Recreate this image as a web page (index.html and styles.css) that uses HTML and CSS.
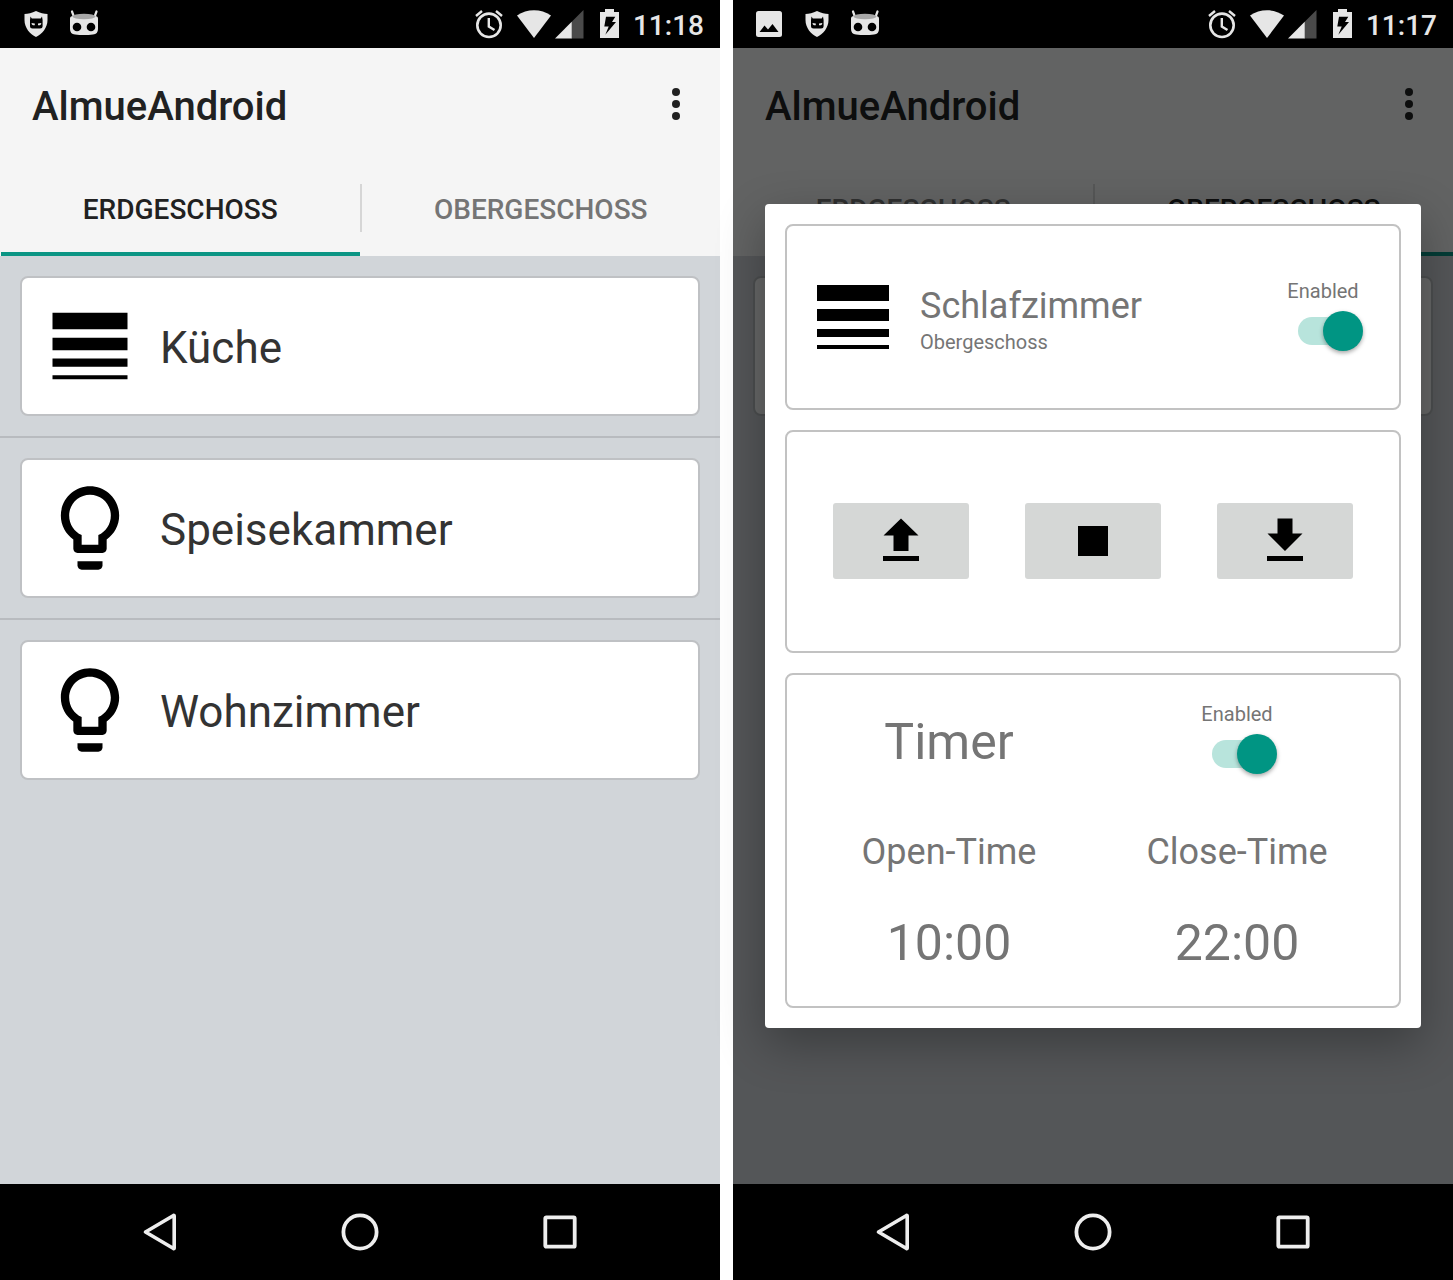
FILE: index.html
```html
<!DOCTYPE html>
<html lang="de">
<head>
<meta charset="utf-8">
<meta name="viewport" content="width=device-width, initial-scale=1">
<title>AlmueAndroid</title>
<link rel="stylesheet" href="styles.css">
</head>
<body>
<svg class="sprite" aria-hidden="true">
  <symbol id="shield" viewBox="0 0 48 48">
    <path fill="#e6e6e6" d="M24 11C20 13 16 14 12.500 14V20C12.500 28 18 34 24 37C30 34 35.500 28 35.500 20V14C32 14 28 13 24 11Z"/>
    <path d="M18.500 16.500L19.800 18.500H28.700L30 16.500L30.600 20V26Q30.600 28.500 28 28.500H20.500Q18 28.500 18 26V20Z"/>
    <path fill="#e6e6e6" d="M19.500 23L22.800 23.500V25.300H21Q19.500 25 19.500 23ZM29.300 23L26 23.500V25.300H27.800Q29.300 25 29.300 23Z"/>
  </symbol>
  <symbol id="robot" viewBox="0 0 48 48">
    <path d="M12 11.500L14 17M36.500 11.500L34.500 17" stroke="#e6e6e6" stroke-width="2.200" stroke-linecap="round"/>
    <path fill="#e6e6e6" d="M10 18.500Q10 16 13 16H35Q38 16 38 18.500V29Q38 34 33 34.500Q24 35.500 15 34.500Q10 34 10 29Z"/>
    <ellipse cx="24" cy="16.500" rx="11.500" ry="2.800" fill="#a8a8a8"/>
    <circle cx="17" cy="27" r="4.300"/><circle cx="31" cy="27" r="4.300"/>
  </symbol>
  <symbol id="picture" viewBox="0 0 48 48">
    <rect x="11" y="11" width="26" height="26" rx="2.500" fill="#e6e6e6"/>
    <path d="M14.500 32L19.500 25.500L23 29.500L27.500 24L33.500 32Z"/>
  </symbol>
  <symbol id="alarm" viewBox="475 0 38 48">
    <circle cx="489" cy="25.300" r="11.700" fill="none" stroke="#e6e6e6" stroke-width="2.600"/>
    <path d="M476 16L482 11M496 11L502 16M488.800 18V26.500L494.500 30" fill="none" stroke="#e6e6e6" stroke-width="2.400"/>
  </symbol>
  <symbol id="wifi" viewBox="517 0 34 48">
    <path fill="#e6e6e6" d="M534 38L517 15.500C527 8.500 541 8.500 551 15.500Z"/>
  </symbol>
  <symbol id="signal" viewBox="555 0 32 48">
    <path fill="#4a4a4a" d="M571 22.500L583.500 10V38.500H571Z"/>
    <path fill="#e6e6e6" d="M555 38.500L571.700 21.800V38.500Z"/>
  </symbol>
  <symbol id="battery" viewBox="591 0 38 48">
    <path fill="#e6e6e6" d="M600 12H605V9H614V12H619V38H600Z"/>
    <path d="M606 16.700H615.300L612 22H616L605.300 34.700L608.700 26.500H604.300Z"/>
  </symbol>
  <symbol id="dots" viewBox="0 0 48 48">
    <circle cx="24" cy="12" r="4"/><circle cx="24" cy="24" r="4"/><circle cx="24" cy="36" r="4"/>
  </symbol>
  <symbol id="blinds" viewBox="0 0 24 24">
    <path d="M3 17h18v-2H3v2zm0 3h18v-1H3v1zm0-7h18v-3H3v3zm0-9v4h18V4H3z"/>
  </symbol>
  <symbol id="bulb" viewBox="0 0 24 24">
    <path d="M9 21c0 .55.45 1 1 1h4c.55 0 1-.45 1-1v-1H9v1z"/>
    <path fill-rule="evenodd" d="M12 2C8.140 2 5 5.140 5 9c0 2.380 1.190 4.470 3 5.740V17c0 .55.45 1 1 1h6c.55 0 1-.45 1-1v-2.260c1.810-1.270 3-3.360 3-5.740 0-3.860-3.140-7-7-7zM14 13.700V16h-4v-2.300C8.200 12.900 7 11.100 7 9c0-2.760 2.240-5 5-5s5 2.240 5 5c0 2.100-1.200 3.900-3 4.700z"/>
  </symbol>
  <symbol id="back" viewBox="0 0 48 48">
    <path d="M9.500 24L37.500 7.500Q38.200 7.200 38.200 8V40Q38.200 40.800 37.500 40.500Z" fill="none" stroke="#eee" stroke-width="3.600" stroke-linejoin="round"/>
  </symbol>
  <symbol id="home" viewBox="0 0 48 48">
    <circle cx="24" cy="24" r="16.600" fill="none" stroke="#eee" stroke-width="3.800"/>
  </symbol>
  <symbol id="recent" viewBox="0 0 48 48">
    <rect x="9.300" y="9.300" width="29.400" height="29.400" rx="1" fill="none" stroke="#eee" stroke-width="3.800"/>
  </symbol>
</svg>

<main class="screens">
  <section class="screen">
    <div class="status">
      <svg class="status-icon"><use href="#shield"/></svg>
      <svg class="status-icon"><use href="#robot"/></svg>
      <div class="status-right">
        <svg class="alarm"><use href="#alarm"/></svg>
        <svg class="wifi"><use href="#wifi"/></svg>
        <svg class="signal"><use href="#signal"/></svg>
        <svg class="battery"><use href="#battery"/></svg>
        <span class="clock">11:18</span>
      </div>
    </div>
    <div class="app">
      <header class="titlebar">
        <h1 class="title">AlmueAndroid</h1>
        <button class="menu"><svg><use href="#dots"/></svg></button>
      </header>
      <nav class="tabs">
        <button class="tab tab-active">ERDGESCHOSS</button>
        <span class="tab-divider"></span>
        <button class="tab">OBERGESCHOSS</button>
      </nav>
      <ul class="rooms">
        <li class="room"><button class="card"><svg class="card-icon"><use href="#blinds"/></svg><span class="card-name">Küche</span></button></li>
        <li class="room"><button class="card"><svg class="card-icon"><use href="#bulb"/></svg><span class="card-name">Speisekammer</span></button></li>
        <li class="room"><button class="card"><svg class="card-icon"><use href="#bulb"/></svg><span class="card-name">Wohnzimmer</span></button></li>
      </ul>
    </div>
    <nav class="navbar">
      <button class="nav-button"><svg><use href="#back"/></svg></button>
      <button class="nav-button"><svg><use href="#home"/></svg></button>
      <button class="nav-button"><svg><use href="#recent"/></svg></button>
    </nav>
  </section>

  <section class="screen">
    <div class="status">
      <svg class="status-icon"><use href="#picture"/></svg>
      <svg class="status-icon"><use href="#shield"/></svg>
      <svg class="status-icon"><use href="#robot"/></svg>
      <div class="status-right">
        <svg class="alarm"><use href="#alarm"/></svg>
        <svg class="wifi"><use href="#wifi"/></svg>
        <svg class="signal"><use href="#signal"/></svg>
        <svg class="battery"><use href="#battery"/></svg>
        <span class="clock">11:17</span>
      </div>
    </div>
    <div class="app">
      <header class="titlebar">
        <h1 class="title">AlmueAndroid</h1>
        <button class="menu"><svg><use href="#dots"/></svg></button>
      </header>
      <nav class="tabs">
        <button class="tab">ERDGESCHOSS</button>
        <span class="tab-divider"></span>
        <button class="tab tab-active">OBERGESCHOSS</button>
      </nav>
      <ul class="rooms">
        <li class="room"><div class="card"></div></li>
      </ul>
      <div class="scrim">
        <div class="dialog" role="dialog">
          <section class="panel device">
            <svg class="device-icon"><use href="#blinds"/></svg>
            <div class="device-text">
              <h2 class="device-name">Schlafzimmer</h2>
              <p class="device-floor">Obergeschoss</p>
            </div>
            <label class="toggle">Enabled<input class="switch" type="checkbox" role="switch" checked></label>
          </section>
          <section class="panel controls">
            <button class="control"><svg viewBox="0 0 48 48"><path d="M24 1.500L41.500 18.500H31.500V34H16.500V18.500H6.500ZM6 39H42V44H6Z"/></svg></button>
            <button class="control"><svg viewBox="0 0 48 48"><path d="M9 9H39V39H9Z"/></svg></button>
            <button class="control"><svg viewBox="0 0 48 48"><path d="M16.500 1.500H31.500V16.500H41.500L24 34L6.500 16.500H16.500ZM6 39H42V44H6Z"/></svg></button>
          </section>
          <section class="panel timer">
            <h2 class="big">Timer</h2>
            <label class="toggle">Enabled<input class="switch" type="checkbox" role="switch" checked></label>
            <span class="time-label" id="open">Open-Time</span>
            <span class="time-label" id="close">Close-Time</span>
            <button class="big" aria-describedby="open">10:00</button>
            <button class="big" aria-describedby="close">22:00</button>
          </section>
        </div>
      </div>
    </div>
    <nav class="navbar">
      <button class="nav-button"><svg><use href="#back"/></svg></button>
      <button class="nav-button"><svg><use href="#home"/></svg></button>
      <button class="nav-button"><svg><use href="#recent"/></svg></button>
    </nav>
  </section>
</main>
</body>
</html>
```
FILE: styles.css
```css
* {
  box-sizing: border-box;
}

body {
  margin: 0;
  background: #fff;
  font-family: Roboto, "Liberation Sans", sans-serif;
}

h1,
h2,
p,
ul {
  margin: 0;
  padding: 0;
  font-weight: 400;
}

button {
  border: 0;
  padding: 0;
  background: none;
  color: inherit;
  font: inherit;
}

svg {
  display: block;
}

.sprite {
  display: none;
}

.screens {
  display: grid;
  grid-template-columns: 1fr 1fr;
  gap: 13px;
  min-height: 100vh;
}

.screen {
  display: flex;
  flex-direction: column;
  background: #d1d5d9;
}

/* System status bar */
.status {
  display: flex;
  align-items: center;
  padding: 0 16px 0 12px;
  background: #000;
}

.status svg {
  height: 48px;
}

.status-icon {
  width: 48px;
}

.status-right {
  display: flex;
  align-items: center;
  gap: 4px;
  margin-left: auto;
}

.alarm {
  width: 38px;
}

.wifi {
  width: 34px;
}

.signal {
  width: 32px;
}

.battery {
  width: 38px;
}

.clock {
  padding-top: 4px;
  color: #e6e6e6;
  font-size: 28px;
  font-weight: 500;
  line-height: 44px;
}

/* App header */
.app {
  position: relative;
  flex: 1;
}

.titlebar {
  display: flex;
  align-items: center;
  justify-content: space-between;
  height: 112px;
  padding: 0 20px 0 32px;
  background: #f5f5f5;
  color: #212121;
}

.title {
  padding-top: 6px;
  font-size: 40px;
  font-weight: 500;
  line-height: 48px;
}

.menu svg {
  width: 48px;
  height: 48px;
  fill: #212121;
}

.tabs {
  display: flex;
  align-items: center;
  padding-left: 1px;
  background: #f5f5f5;
}

.tab {
  flex: 1;
  height: 96px;
  padding-top: 2px;
  color: #757575;
  font-size: 28px;
  font-weight: 500;
}

.tab-active {
  box-shadow: inset 0 -4px #0b9584;
  color: #212121;
}

.tab-divider {
  width: 2px;
  height: 48px;
  background: #d6d6d6;
}

/* Room list */
.rooms {
  list-style: none;
}

.room {
  padding: 20px;
}

.room + .room {
  border-top: 2px solid #b8bbbf;
}

.card {
  display: flex;
  align-items: center;
  gap: 20px;
  width: 100%;
  min-height: 140px;
  padding: 18px;
  border: 2px solid #bfc1c4;
  border-radius: 8px;
  background: #fff;
  color: #333;
  font-size: 44px;
  text-align: left;
}

.card-icon {
  width: 100px;
  height: 100px;
}

.card-name {
  padding-top: 4px;
}

/* Dialog */
.scrim {
  position: absolute;
  inset: 0;
  display: flex;
  align-items: center;
  padding: 0 32px;
  background: rgba(0, 2, 1, 0.6);
}

.dialog {
  display: flex;
  flex: 1;
  flex-direction: column;
  gap: 20px;
  padding: 20px;
  border-radius: 4px;
  background: #fff;
  box-shadow: 0 16px 48px rgba(0, 0, 0, 0.3);
  color: #757575;
}

.panel {
  border: 2px solid #c2c2c2;
  border-radius: 8px;
}

.device {
  display: flex;
  align-items: center;
  gap: 19px;
  padding: 43px 36px 43px 18px;
}

.device-icon {
  width: 96px;
  height: 96px;
}

.device-text {
  flex: 1;
  padding-top: 2px;
}

.device-name {
  font-size: 36px;
  line-height: 48px;
}

.device-floor {
  font-size: 20px;
  line-height: 24px;
}

.toggle {
  display: flex;
  flex-direction: column;
  align-items: center;
  gap: 8px;
  padding-bottom: 4px;
  font-size: 20px;
  line-height: 24px;
}

.timer .toggle {
  padding-bottom: 8px;
}

.switch {
  display: grid;
  align-items: center;
  justify-items: end;
  width: 80px;
  height: 40px;
  margin: 0;
  appearance: none;
}

.switch::before,
.switch::after {
  grid-area: 1 / 1;
  content: "";
}

.switch::before {
  width: 56px;
  height: 28px;
  margin-right: 9px;
  border-radius: 14px;
  background: #b8e4dc;
}

.switch::after {
  width: 40px;
  height: 40px;
  border-radius: 50%;
  background: #009583;
  box-shadow: 0 2px 4px rgba(0, 0, 0, 0.35);
}

.controls {
  display: flex;
  justify-content: center;
  gap: 56px;
  padding: 71px 0 72px;
}

.control {
  display: flex;
  align-items: center;
  justify-content: center;
  width: 136px;
  height: 76px;
  border-radius: 3px;
  background: #d5d7d6;
}

.control svg {
  width: 48px;
  height: 48px;
}

.timer {
  display: grid;
  grid-template-columns: 1fr 1fr;
  grid-template-rows: 110px 110px 72px;
  place-items: center;
  padding: 12px 18px 27px;
}

.big {
  font-size: 50px;
  line-height: 60px;
}

.time-label {
  font-size: 36px;
  line-height: 48px;
}

/* System navigation bar */
.navbar {
  display: flex;
  justify-content: center;
  background: #000;
}

.nav-button {
  display: flex;
  align-items: center;
  justify-content: center;
  width: 200px;
  height: 96px;
}

.nav-button svg {
  width: 48px;
  height: 48px;
}
```
